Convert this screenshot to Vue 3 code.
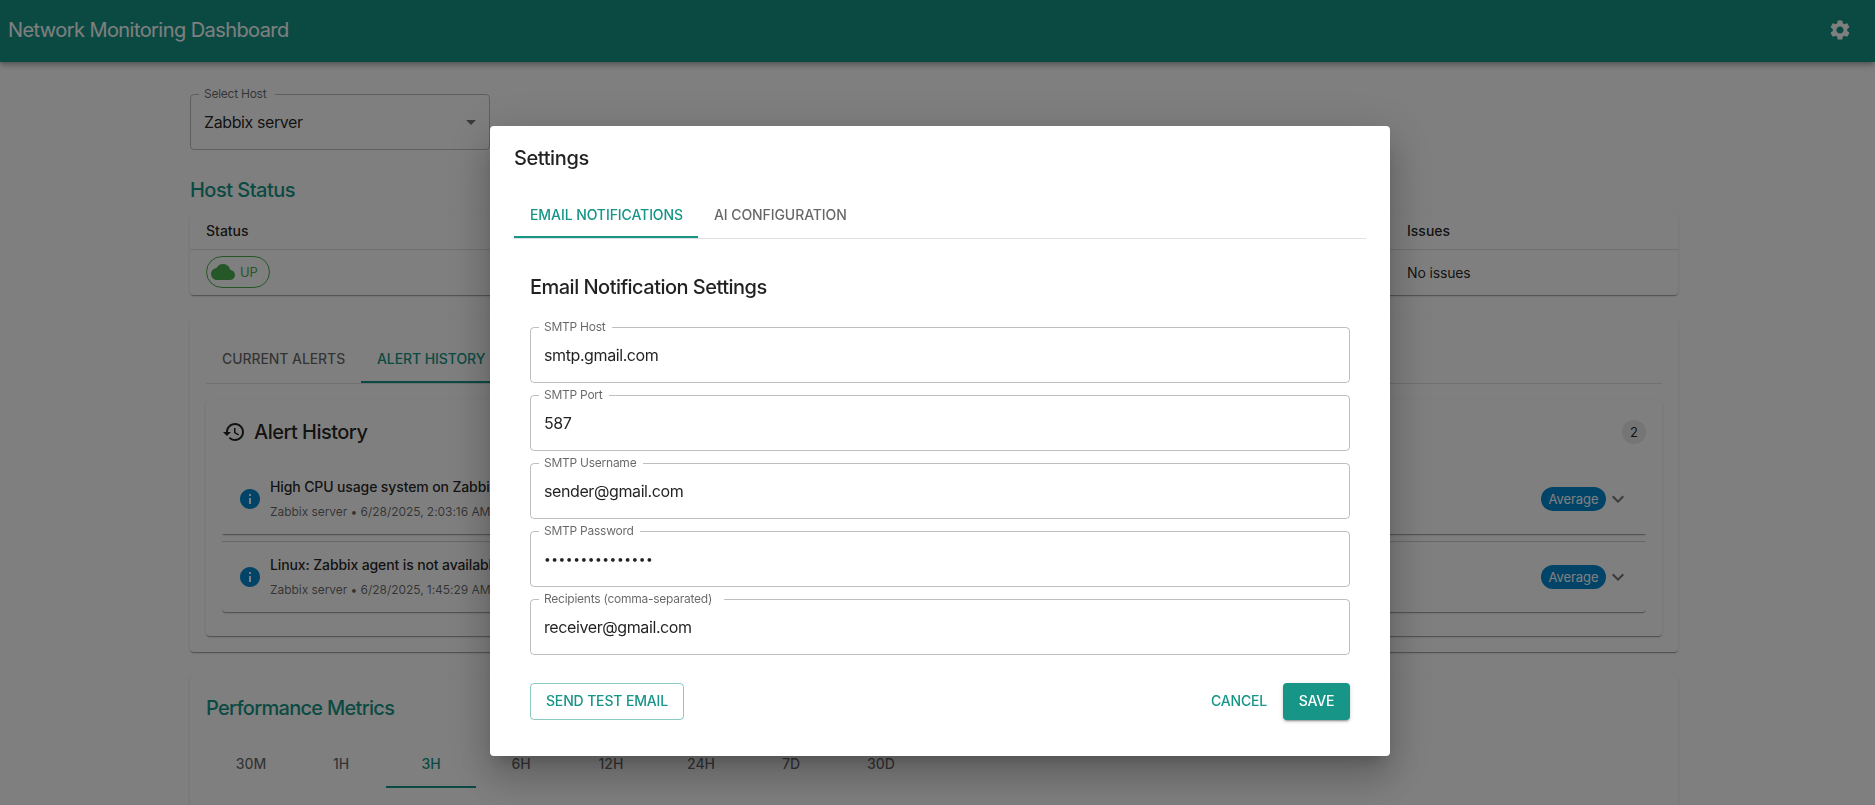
<script setup>
const fields = [
  { label: 'SMTP Host', value: 'smtp.gmail.com', notch: 73 },
  { label: 'SMTP Port', value: '587', notch: 70 },
  { label: 'SMTP Username', value: 'sender@gmail.com', notch: 104 },
  { label: 'SMTP Password', value: '•••••••••••••••', notch: 101, secret: true },
  { label: 'Recipients (comma-separated)', value: 'receiver@gmail.com', notch: 185 },
]
const alerts = [
  { title: 'High CPU usage system on Zabbix server', meta: 'Zabbix server • 6/28/2025, 2:03:16 AM' },
  { title: 'Linux: Zabbix agent is not available', meta: 'Zabbix server • 6/28/2025, 1:45:29 AM' },
]
const ranges = ['30M', '1H', '3H', '6H', '12H', '24H', '7D', '30D']
</script>

<template>
  <div class="app">
    <header class="bar">
      <h1 class="bar-title">Network Monitoring Dashboard</h1>
      <svg class="gear" viewBox="0 0 24 24"><path d="M19.14 12.94c.04-.3.06-.61.06-.94 0-.32-.02-.64-.07-.94l2.03-1.58c.18-.14.23-.41.12-.61l-1.92-3.32c-.12-.22-.37-.29-.59-.22l-2.39.96c-.5-.38-1.03-.7-1.62-.94l-.36-2.54c-.04-.24-.24-.41-.48-.41h-3.84c-.24 0-.43.17-.47.41l-.36 2.54c-.59.24-1.13.57-1.62.94l-2.39-.96c-.22-.08-.47 0-.59.22L2.74 8.87c-.12.21-.08.47.12.61l2.03 1.58c-.05.3-.09.63-.09.94s.02.64.07.94l-2.03 1.58c-.18.14-.23.41-.12.61l1.92 3.32c.12.22.37.29.59.22l2.39-.96c.5.38 1.03.7 1.62.94l.36 2.54c.05.24.24.41.48.41h3.84c.24 0 .44-.17.47-.41l.36-2.54c.59-.24 1.13-.56 1.62-.94l2.39.96c.22.08.47 0 .59-.22l1.92-3.32c.12-.22.07-.47-.12-.61l-2.01-1.58zM12 15.6c-1.98 0-3.6-1.62-3.6-3.6s1.62-3.6 3.6-3.6 3.6 1.62 3.6 3.6-1.62 3.6-3.6 3.6z" /></svg>
    </header>

    <main class="content">
      <div class="field select">
        <span class="notch" :style="{ width: '76px' }"><span class="label">Select Host</span></span>
        <span class="value">Zabbix server</span>
        <svg class="caret" viewBox="0 0 24 24"><path d="M7 10l5 5 5-5z" /></svg>
      </div>

      <h2 class="h6 teal host-title">Host Status</h2>
      <section class="card table">
        <div class="row head"><span>Status</span><span>Issues</span></div>
        <div class="row">
          <span class="up">
            <svg viewBox="0 0 24 24"><path d="M19.35 10.04C18.67 6.59 15.64 4 12 4 9.11 4 6.6 5.64 5.35 8.04 2.34 8.36 0 10.91 0 14c0 3.31 2.69 6 6 6h13c2.76 0 5-2.24 5-5 0-2.64-2.05-4.78-4.65-4.96z" /></svg>
            <span>UP</span>
          </span>
          <span>No issues</span>
        </div>
      </section>

      <section class="card alerts">
        <nav class="tabs">
          <span class="tab t-current">CURRENT ALERTS</span>
          <span class="tab t-history active">ALERT HISTORY</span>
        </nav>
        <div class="card history">
          <div class="history-head">
            <svg class="clock" viewBox="0 0 24 24"><path d="M13 3c-4.97 0-9 4.03-9 9H1l3.89 3.89.07.14L9 12H6c0-3.87 3.13-7 7-7s7 3.13 7 7-3.13 7-7 7c-1.93 0-3.68-.79-4.94-2.06l-1.42 1.42C8.27 19.99 10.51 21 13 21c4.97 0 9-4.03 9-9s-4.03-9-9-9zm-1 5v5l4.28 2.54.72-1.21-3.5-2.08V8H12z" /></svg>
            <h2 class="h6 history-title">Alert History</h2>
            <span class="count">2</span>
          </div>
          <article v-for="(a, i) in alerts" :key="a.title" class="alert" :class="i ? 'last' : 'first'">
            <svg class="info" viewBox="0 0 24 24"><path d="M12 2C6.48 2 2 6.48 2 12s4.48 10 10 10 10-4.48 10-10S17.52 2 12 2zm1 15h-2v-6h2v6zm0-8h-2V7h2v2z" /></svg>
            <div class="alert-text">
              <div class="alert-title">{{ a.title }}</div>
              <div class="alert-meta">{{ a.meta }}</div>
            </div>
            <span class="severity">Average</span>
            <svg class="chevron" viewBox="0 0 24 24"><path d="M16.59 8.59L12 13.17 7.41 8.59 6 10l6 6 6-6z" /></svg>
          </article>
        </div>
      </section>

      <section class="card metrics">
        <h2 class="h6 teal metrics-title">Performance Metrics</h2>
        <nav class="ranges">
          <span v-for="r in ranges" :key="r" class="range" :class="{ active: r === '3H' }">{{ r }}</span>
        </nav>
      </section>
    </main>

    <div class="overlay">
      <div class="dialog">
        <h2 class="h6 dialog-title">Settings</h2>
        <nav class="tabs dialog-tabs">
          <span class="tab t-email active">EMAIL NOTIFICATIONS</span>
          <span class="tab t-ai">AI CONFIGURATION</span>
        </nav>
        <div class="form">
          <h2 class="h6 form-title">Email Notification Settings</h2>
          <div v-for="f in fields" :key="f.label" class="field">
            <span class="notch" :style="{ width: f.notch + 'px' }"><span class="label">{{ f.label }}</span></span>
            <span class="value" :class="{ secret: f.secret }">{{ f.value }}</span>
          </div>
          <div class="actions">
            <button class="btn outlined">SEND TEST EMAIL</button>
            <button class="btn text">CANCEL</button>
            <button class="btn contained">SAVE</button>
          </div>
        </div>
      </div>
    </div>
  </div>
</template>

<style>
body {
  margin: 0;
  overflow: hidden;
}
</style>

<style scoped>
* {
  box-sizing: border-box;
}
.app {
  height: 805px;
  overflow: hidden;
  background: #fff;
  color: rgba(0, 0, 0, 0.87);
  font-family: Inter, "Liberation Sans", sans-serif;
  font-size: 14px;
  white-space: nowrap;
}
svg {
  fill: currentColor;
  flex: none;
}
h1,
h2 {
  margin: 0;
}
.bar {
  height: 62px;
  display: flex;
  align-items: center;
  justify-content: space-between;
  padding: 0 23px 2px 8px;
  background: #179587;
  color: #fff;
  box-shadow: 0 2px 4px -1px rgba(0, 0, 0, 0.2), 0 4px 5px rgba(0, 0, 0, 0.14), 0 1px 10px rgba(0, 0, 0, 0.12);
}
.bar-title {
  font-size: 20px;
  font-weight: 400;
  letter-spacing: -0.57px;
}
.gear {
  width: 24px;
  height: 24px;
}
.content {
  width: 1488px;
  margin-left: 190px;
  padding-top: 32px;
}
.h6 {
  font-size: 20px;
  line-height: 32px;
  font-weight: 500;
  letter-spacing: -0.52px;
}
.teal {
  color: #179587;
}
.field {
  position: relative;
  height: 56px;
  display: flex;
  align-items: center;
  padding: 0 13px;
  border: 1px solid rgba(0, 0, 0, 0.25);
  border-radius: 4px;
}
.notch {
  position: absolute;
  left: 8px;
  top: -1px;
  height: 1px;
  display: flex;
  align-items: center;
  padding-left: 5px;
  background: #fff;
}
.label {
  padding-bottom: 2px;
  font-size: 12px;
  line-height: 16px;
  letter-spacing: -0.25px;
  color: rgba(0, 0, 0, 0.6);
}
.value {
  font-size: 16px;
  letter-spacing: -0.4px;
}
.value.secret {
  padding-bottom: 1px;
  letter-spacing: 0.54px;
  font-size: 12px;
}
.select {
  width: 300px;
  justify-content: space-between;
  padding-right: 6px;
}
.caret {
  width: 24px;
  height: 24px;
  color: rgba(0, 0, 0, 0.54);
}
.host-title {
  margin-top: 24px;
  margin-bottom: 7px;
}
.card {
  background: #fff;
  border-radius: 4px;
  box-shadow: 0 2px 1px -1px rgba(0, 0, 0, 0.2), 0 1px 1px rgba(0, 0, 0, 0.14), 0 1px 3px rgba(0, 0, 0, 0.12);
}
.table {
  height: 82px;
}
.row {
  display: grid;
  grid-template-columns: 1201px 1fr;
  align-items: center;
  height: 45px;
  padding: 0 0 1px 16px;
  letter-spacing: -0.15px;
}
.row.head {
  height: 37px;
  border-bottom: 1px solid #e0e0e0;
  font-weight: 500;
  letter-spacing: 0;
}
.up {
  width: 64px;
  height: 32px;
  display: flex;
  align-items: center;
  padding-left: 4px;
  gap: 5px;
  border: 1px solid #4caf50;
  border-radius: 16px;
  color: #4caf50;
  font-size: 13px;
}
.up svg {
  width: 24px;
  height: 24px;
}
.alerts {
  height: 334px;
  margin-top: 23px;
  padding: 17px 16px 0;
}
.tabs {
  display: flex;
  height: 49px;
  border-bottom: 1px solid #e0e0e0;
}
.tab {
  height: 48px;
  display: flex;
  align-items: center;
  padding-left: 16px;
  color: rgba(0, 0, 0, 0.6);
  font-weight: 450;
  letter-spacing: -0.08px;
}
.alerts .tab {
  padding-bottom: 2px;
}
.tab.active {
  color: #179587;
  box-shadow: inset 0 -2px #179587;
}
.t-current {
  width: 155px;
}
.t-history {
  width: 142px;
}
.history {
  height: 236px;
  margin-top: 16px;
  padding: 16px;
}
.history-head {
  display: flex;
  align-items: center;
  height: 32px;
  margin-bottom: 16px;
}
.clock {
  width: 24px;
  height: 24px;
}
.history-title {
  flex: 1;
  margin-left: 8px;
}
.count {
  width: 24px;
  height: 24px;
  border-radius: 12px;
  background: #ebebeb;
  font-size: 13px;
  line-height: 24px;
  text-align: center;
}
.alert {
  height: 70px;
  display: flex;
  align-items: center;
  padding: 0 16px;
  box-shadow: 0 2px 1px -1px rgba(0, 0, 0, 0.2), 0 1px 1px rgba(0, 0, 0, 0.14), 0 1px 3px rgba(0, 0, 0, 0.12);
  clip-path: inset(0 0 -4px 0);
}
.alert.first {
  border-radius: 4px 4px 0 0;
}
.alert.last {
  height: 71px;
  margin-top: 7px;
  border-top: 1px solid #d0d0d0;
  border-radius: 0 0 4px 4px;
}
.info {
  width: 24px;
  height: 24px;
  color: #0288d1;
}
.alert-text {
  flex: 1;
  margin-left: 8px;
}
.alert-title {
  font-weight: 500;
  line-height: 22px;
  letter-spacing: -0.12px;
}
.alert-meta {
  margin-top: 4px;
  font-size: 12px;
  line-height: 20px;
  letter-spacing: -0.05px;
  color: rgba(0, 0, 0, 0.6);
}
.severity {
  width: 65px;
  height: 24px;
  border-radius: 12px;
  background: #0288d1;
  color: #fff;
  font-size: 13px;
  line-height: 24px;
  letter-spacing: -0.1px;
  text-align: center;
}
.chevron {
  width: 24px;
  height: 24px;
  color: rgba(0, 0, 0, 0.54);
}
.metrics {
  height: 400px;
  margin-top: 24px;
  padding: 16px;
}
.metrics-title {
  letter-spacing: -0.7px;
}
.ranges {
  display: flex;
  margin-top: 16px;
}
.range {
  width: 90px;
  height: 48px;
  line-height: 48px;
  text-align: center;
  font-weight: 450;
  color: rgba(0, 0, 0, 0.6);
}
.range.active {
  color: #179587;
  border-bottom: 2px solid #179587;
}
.overlay {
  position: fixed;
  inset: 0;
  background: rgba(0, 0, 0, 0.5);
}
.dialog {
  width: 900px;
  height: 630px;
  margin: 126px 0 0 490px;
  padding: 16px 24px;
  background: #fff;
  border-radius: 4px;
  box-shadow: 0 11px 15px -7px rgba(0, 0, 0, 0.2), 0 24px 38px 3px rgba(0, 0, 0, 0.14), 0 9px 46px 8px rgba(0, 0, 0, 0.12);
}
.dialog-title {
  letter-spacing: -0.4px;
}
.dialog-tabs {
  margin-top: 16px;
}
.t-email {
  width: 184px;
}
.form {
  padding: 32px 16px 0;
}
.form-title {
  margin-bottom: 24px;
}
.form .field + .field {
  margin-top: 12px;
}
.actions {
  display: flex;
  margin-top: 28px;
}
.btn {
  height: 37px;
  padding: 0 0 2px;
  border: 0;
  border-radius: 4px;
  background: none;
  color: #179587;
  font: 500 14px Inter, "Liberation Sans", sans-serif;
  letter-spacing: -0.15px;
}
.btn.outlined {
  width: 154px;
  margin-right: auto;
  border: 1px solid rgba(23, 149, 135, 0.5);
}
.btn.text {
  width: 72px;
  margin-right: 8px;
}
.btn.contained {
  width: 67px;
  background: #179587;
  color: #fff;
  box-shadow: 0 3px 1px -2px rgba(0, 0, 0, 0.2), 0 2px 2px rgba(0, 0, 0, 0.14), 0 1px 5px rgba(0, 0, 0, 0.12);
}
</style>
